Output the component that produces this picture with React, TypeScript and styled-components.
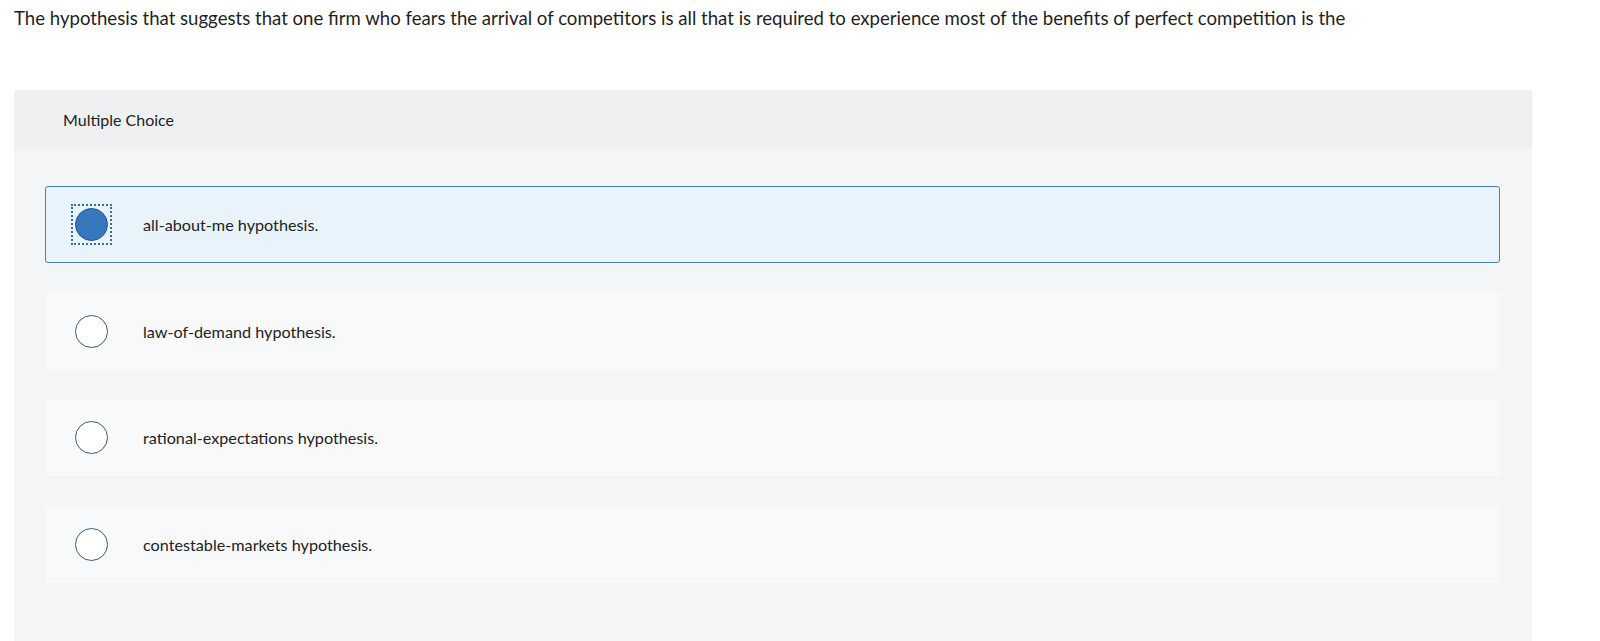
import React from "react";
import styled, { createGlobalStyle } from "styled-components";

const Global = createGlobalStyle`
  html, body { margin: 0; padding: 0; background: #ffffff; }
  body { font-family: "Lato", "Open Sans", sans-serif; color: #222; }
`;

const Page = styled.div`
  padding: 6px 0 0 14px;
  width: 1518px;
`;

const Question = styled.p`
  margin: 0;
  font-size: 18.6px;
  line-height: 24px;
  color: #1f1f1f;
`;

const Panel = styled.section`
  margin-top: 60px;
  background: #f4f5f7;
  height: 560px;
`;

const Header = styled.div`
  height: 59px;
  background: #eff0f2;
  display: flex;
  align-items: center;
  padding-left: 49px;
  font-size: 16px;
  color: #222;
`;

const Options = styled.div`
  display: flex;
  flex-direction: column;
  gap: 29.5px;
  padding: 37px 32px 0 31px;
`;

const Option = styled.label<{ $selected?: boolean }>`
  box-sizing: border-box;
  height: 77px;
  display: flex;
  align-items: center;
  padding-left: 25px;
  border-radius: 3px;
  background: ${(p) => (p.$selected ? "#e9f3fc" : "#f8f9fb")};
  border: 1px solid ${(p) => (p.$selected ? "#4a7fb0" : "transparent")};
  cursor: pointer;
`;

const RadioFocus = styled.span<{ $selected?: boolean }>`
  box-sizing: border-box;
  display: flex;
  align-items: center;
  justify-content: center;
  width: 41px;
  height: 41px;
  flex: none;
  border: 2px dotted ${(p) => (p.$selected ? "#3b6e9c" : "transparent")};
`;

const Radio = styled.span<{ $selected?: boolean }>`
  box-sizing: border-box;
  display: block;
  width: 33px;
  height: 33px;
  border-radius: 50%;
  flex: none;
  border: 1.5px solid ${(p) => (p.$selected ? "#24568a" : "#3d5a70")};
  background: ${(p) => (p.$selected ? "#3677bd" : "#ffffff")};
`;

const OptionText = styled.span`
  margin-left: 31px;
  font-size: 16.2px;
  color: #222;
`;

const choices = [
  "all-about-me hypothesis.",
  "law-of-demand hypothesis.",
  "rational-expectations hypothesis.",
  "contestable-markets hypothesis.",
];

export default function App() {
  return (
    <>
      <Global />
      <Page>
        <Question>
          The hypothesis that suggests that one firm who fears the arrival of competitors is all that is required to
          experience most of the benefits of perfect competition is the
        </Question>
        <Panel>
          <Header>Multiple Choice</Header>
          <Options>
            {choices.map((c, i) => (
              <Option key={c} $selected={i === 0}>
                <RadioFocus $selected={i === 0}>
                  <Radio $selected={i === 0} />
                </RadioFocus>
                <OptionText>{c}</OptionText>
              </Option>
            ))}
          </Options>
        </Panel>
      </Page>
    </>
  );
}
